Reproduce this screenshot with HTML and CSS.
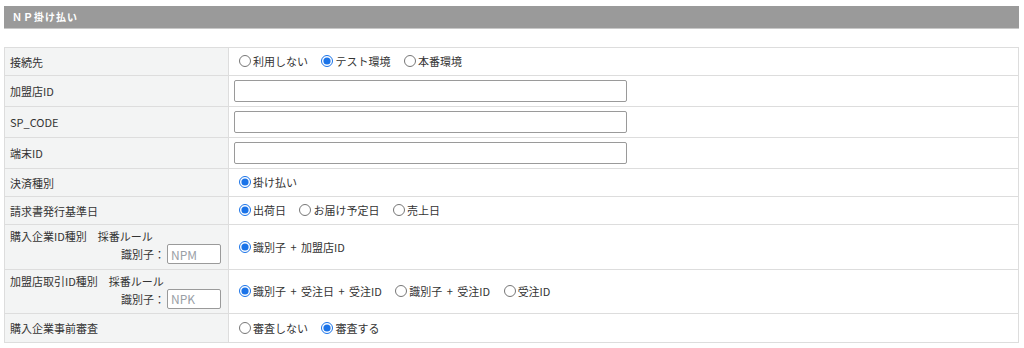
FILE: index.html
```html
<!DOCTYPE html>
<html lang="ja">
<head>
    <meta charset="UTF-8">
    <title>NP掛け払い</title>
    <link rel="stylesheet" href="styles.css">
</head>
<body>
    <div class="section">
        <h2 class="section-title">ＮＰ掛け払い</h2>

        <table class="form-table">
            <tr class="row-short">
                <th>接続先</th>
                <td>
                    <label class="radio"><input type="radio" name="conn">利用しない</label>
                    <label class="radio"><input type="radio" name="conn" checked>テスト環境</label>
                    <label class="radio"><input type="radio" name="conn">本番環境</label>
                </td>
            </tr>
            <tr class="row-input">
                <th>加盟店ID</th>
                <td><input type="text" class="text-input"></td>
            </tr>
            <tr class="row-input">
                <th>SP_CODE</th>
                <td><input type="text" class="text-input"></td>
            </tr>
            <tr class="row-input">
                <th>端末ID</th>
                <td><input type="text" class="text-input"></td>
            </tr>
            <tr class="row-short">
                <th>決済種別</th>
                <td>
                    <label class="radio"><input type="radio" name="kind" checked>掛け払い</label>
                </td>
            </tr>
            <tr class="row-short">
                <th>請求書発行基準日</th>
                <td>
                    <label class="radio"><input type="radio" name="base" checked>出荷日</label>
                    <label class="radio"><input type="radio" name="base">お届け予定日</label>
                    <label class="radio"><input type="radio" name="base">売上日</label>
                </td>
            </tr>
            <tr class="row-tall">
                <th>
                    <div class="label-line">購入企業ID種別　採番ルール</div>
                    <div class="prefix-line">識別子：<input type="text" class="prefix-input" placeholder="NPM"></div>
                </th>
                <td>
                    <label class="radio"><input type="radio" name="buyer" checked>識別子 + 加盟店ID</label>
                </td>
            </tr>
            <tr class="row-tall2">
                <th>
                    <div class="label-line">加盟店取引ID種別　採番ルール</div>
                    <div class="prefix-line">識別子：<input type="text" class="prefix-input" placeholder="NPK"></div>
                </th>
                <td>
                    <label class="radio"><input type="radio" name="trade" checked>識別子 + 受注日 + 受注ID</label>
                    <label class="radio"><input type="radio" name="trade">識別子 + 受注ID</label>
                    <label class="radio"><input type="radio" name="trade">受注ID</label>
                </td>
            </tr>
            <tr class="row-last">
                <th>購入企業事前審査</th>
                <td>
                    <label class="radio"><input type="radio" name="check">審査しない</label>
                    <label class="radio"><input type="radio" name="check" checked>審査する</label>
                </td>
            </tr>
        </table>
    </div>
</body>
</html>
```

FILE: styles.css
```css
* {
    box-sizing: border-box;
}

body {
    margin: 0;
    background: #ffffff;
    color: #333333;
    font-family: "Noto Sans CJK JP", "Noto Sans", sans-serif;
    font-size: 11px;
}

.section {
    padding: 6px 5px 0 4px;
}

.section-title {
    margin: 0 0 18px;
    height: 23px;
    padding: 0 8px;
    background: #9a9a9a;
    border-bottom: 1px solid #c8c8c8;
    color: #ffffff;
    font-size: 10px;
    font-weight: bold;
    letter-spacing: 1px;
    line-height: 21px;
}

.form-table {
    width: 100%;
    border-collapse: collapse;
    border: 1px solid #dddddd;
}

.form-table th,
.form-table td {
    border: 1px solid #dddddd;
    padding: 0 0 0 5px;
    vertical-align: middle;
    line-height: 16px;
}

.form-table th {
    width: 224px;
    background: #f3f4f4;
    font-weight: normal;
    text-align: left;
}

.form-table td {
    background: #ffffff;
}

.row-short { height: 28px; }
.row-input { height: 31px; }
.row-tall { height: 45px; }
.row-tall2 { height: 44px; }
.row-last { height: 29px; }

.radio {
    display: inline-flex;
    align-items: center;
    margin-right: 6px;
    white-space: nowrap;
    word-spacing: 2px;
}

.radio input {
    width: 12px;
    height: 12px;
    margin: 0 2px 0 5px;
    accent-color: #1a73e8;
}

.text-input {
    width: 393px;
    height: 22px;
    border: 1px solid #9a9a9a;
    border-radius: 2px;
    font-family: inherit;
}

.label-line {
    padding-top: 1px;
}

.prefix-line {
    display: flex;
    align-items: center;
    justify-content: flex-end;
    padding: 0 7px 3px 0;
}

.prefix-input {
    width: 54px;
    height: 20px;
    margin-left: 2px;
    border: 1px solid #9a9a9a;
    border-radius: 2px;
    padding: 0 3px;
    font-family: inherit;
    font-size: 12px;
}

.prefix-input::placeholder {
    color: #9aa0a6;
}
```
